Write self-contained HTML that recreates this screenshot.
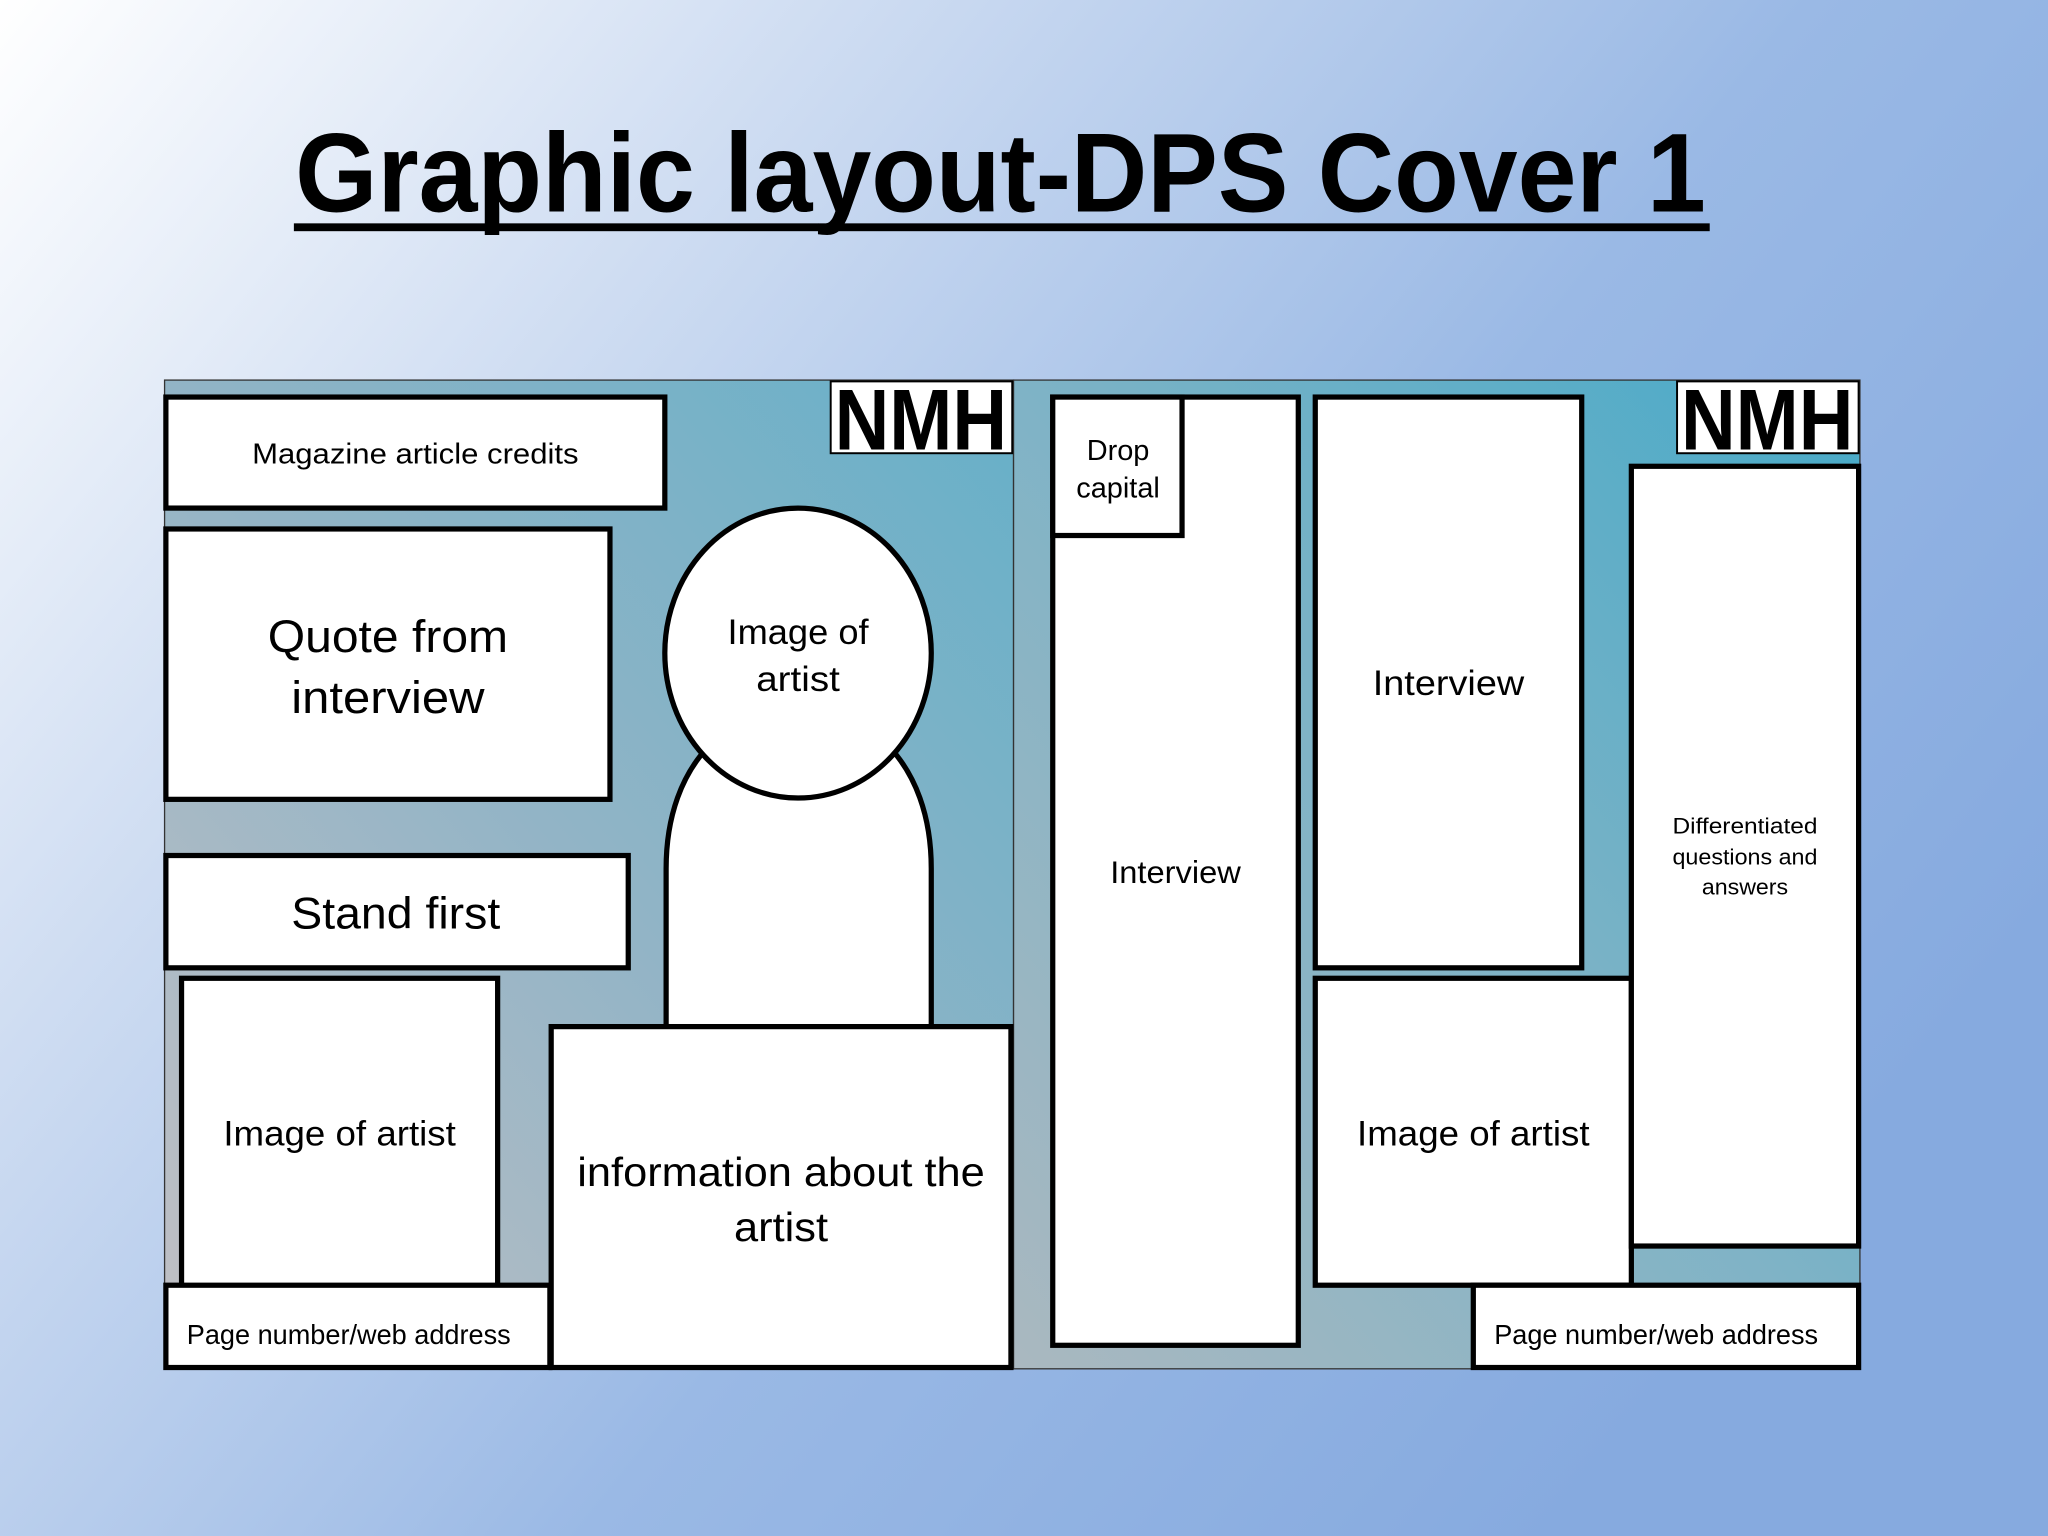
<!DOCTYPE html>
<html><head><meta charset="utf-8"><style>
html,body{margin:0;padding:0;width:2048px;height:1536px;overflow:hidden}
svg{display:block}
text{font-family:"Liberation Sans",sans-serif;fill:#000}
</style></head><body>
<svg width="2048" height="1536" viewBox="0 0 1568 1176" xmlns="http://www.w3.org/2000/svg">
<defs>
<linearGradient id="bg" x1="0" y1="0" x2="1" y2="0.6">
<stop offset="0" stop-color="#ffffff"/><stop offset="0.3" stop-color="#cfddf2"/><stop offset="0.65" stop-color="#9ab9e5"/><stop offset="1" stop-color="#86aadf"/></linearGradient>
<linearGradient id="pl" x1="0" y1="1" x2="1" y2="0">
<stop offset="0" stop-color="#c2c0c4"/><stop offset="0.5" stop-color="#92b4c6"/><stop offset="1" stop-color="#66b0c8"/></linearGradient>
<linearGradient id="pr" x1="0" y1="1" x2="1" y2="0">
<stop offset="0" stop-color="#aab8c0"/><stop offset="0.5" stop-color="#7fb3c6"/><stop offset="1" stop-color="#47aac8"/></linearGradient>
</defs>
<rect width="1568" height="1176" fill="url(#bg)"/>
<text x="766" y="162" font-size="86" font-weight="bold" text-anchor="middle" textLength="1080" lengthAdjust="spacingAndGlyphs">Graphic layout-DPS Cover 1</text>
<rect x="225" y="171" width="1084" height="6" fill="#000"/>
<rect x="126" y="291" width="650" height="757" fill="url(#pl)" stroke="#333" stroke-width="1"/>
<rect x="776" y="291" width="648" height="757" fill="url(#pr)" stroke="#333" stroke-width="1"/>
<g fill="#fff" stroke="#000" stroke-width="4">
<rect x="127" y="304" width="382" height="85"/>
<rect x="127" y="405" width="340" height="207"/>
<path d="M510 786 V665 C510 500 713 500 713 665 V786"/>
<ellipse cx="611" cy="500" rx="102" ry="111"/>
<rect x="127" y="655" width="354" height="86"/>
<rect x="139" y="749" width="242" height="236"/>
<rect x="127" y="984" width="294" height="63"/>
<rect x="422" y="786" width="352" height="261"/>
<rect x="806" y="304" width="188" height="726"/>
<rect x="806" y="304" width="99" height="106"/>
<rect x="1007" y="304" width="204" height="437"/>
<rect x="1007" y="749" width="242" height="235"/>
<rect x="1249" y="357" width="174" height="597"/>
<rect x="1128" y="984" width="295" height="63"/>
</g>
<g fill="#fff" stroke="#000" stroke-width="1.5">
<rect x="636" y="292" width="139" height="55"/>
<rect x="1284" y="292" width="139" height="55"/>
</g>
<text x="705" y="344" font-size="66" font-weight="bold" text-anchor="middle" textLength="132" lengthAdjust="spacingAndGlyphs">NMH</text>
<text x="1353" y="344" font-size="66" font-weight="bold" text-anchor="middle" textLength="132" lengthAdjust="spacingAndGlyphs">NMH</text>
<g text-anchor="middle">
<text x="318" y="355" font-size="22" textLength="250" lengthAdjust="spacingAndGlyphs">Magazine article credits</text>
<text x="297" y="499" font-size="35" textLength="184" lengthAdjust="spacingAndGlyphs">Quote from</text>
<text x="297" y="546" font-size="35" textLength="148" lengthAdjust="spacingAndGlyphs">interview</text>
<text x="611" y="493" font-size="27" textLength="108" lengthAdjust="spacingAndGlyphs">Image of</text>
<text x="611" y="529" font-size="27" textLength="64" lengthAdjust="spacingAndGlyphs">artist</text>
<text x="303" y="711" font-size="34" textLength="160" lengthAdjust="spacingAndGlyphs">Stand first</text>
<text x="260" y="877" font-size="27" textLength="178" lengthAdjust="spacingAndGlyphs">Image of artist</text>
<text x="267" y="1029" font-size="21" textLength="248" lengthAdjust="spacingAndGlyphs">Page number/web address</text>
<text x="598" y="908" font-size="31" textLength="312" lengthAdjust="spacingAndGlyphs">information about the</text>
<text x="598" y="950" font-size="31" textLength="72" lengthAdjust="spacingAndGlyphs">artist</text>
<text x="856" y="352" font-size="22" textLength="48" lengthAdjust="spacingAndGlyphs">Drop</text>
<text x="856" y="381" font-size="22" textLength="64" lengthAdjust="spacingAndGlyphs">capital</text>
<text x="900" y="676" font-size="24" textLength="100" lengthAdjust="spacingAndGlyphs">Interview</text>
<text x="1109" y="532" font-size="27" textLength="116" lengthAdjust="spacingAndGlyphs">Interview</text>
<text x="1128" y="877" font-size="27" textLength="178" lengthAdjust="spacingAndGlyphs">Image of artist</text>
<text x="1336" y="638" font-size="17" textLength="111" lengthAdjust="spacingAndGlyphs">Differentiated</text>
<text x="1336" y="662" font-size="17" textLength="111" lengthAdjust="spacingAndGlyphs">questions and</text>
<text x="1336" y="685" font-size="17" textLength="66" lengthAdjust="spacingAndGlyphs">answers</text>
<text x="1268" y="1029" font-size="21" textLength="248" lengthAdjust="spacingAndGlyphs">Page number/web address</text>
</g>
</svg>
</body></html>
